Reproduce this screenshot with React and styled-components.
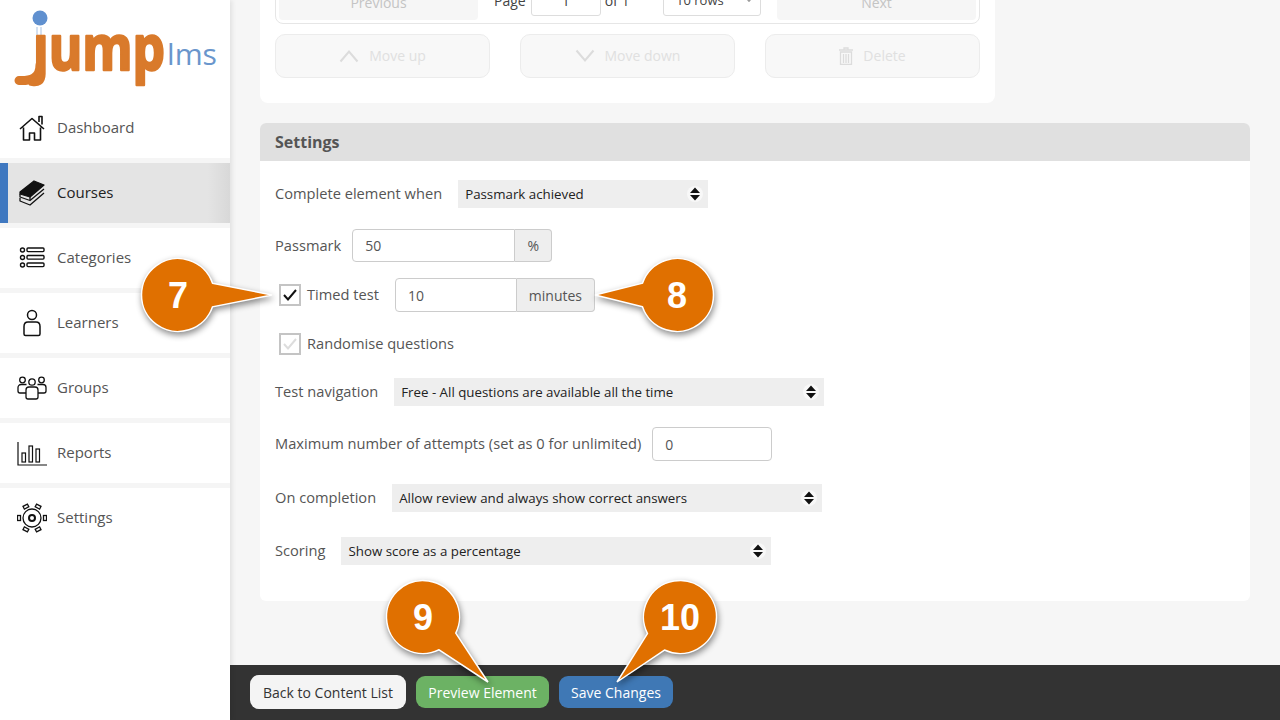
import React from 'react'
import styled, { createGlobalStyle } from 'styled-components'

const GlobalStyle = createGlobalStyle`
  html, body {
    margin: 0;
    height: 100%;
    overflow: hidden;
  }
  body {
    font-family: "Open Sans", "Liberation Sans", sans-serif;
    color: #444;
  }
  * {
    box-sizing: border-box;
  }
`

const Page = styled.div`
  position: relative;
  display: flex;
  width: 1280px;
  height: 720px;
  overflow: hidden;
  background: #f6f6f6;
`

const Sidebar = styled.aside`
  flex: 0 0 230px;
  background: #fff;
  box-shadow: 2px 0 5px rgba(0, 0, 0, 0.09);
  z-index: 1;
`

const LogoBox = styled.div`
  height: 98px;
`

const Nav = styled.nav`
  display: flex;
  flex-direction: column;
  gap: 5px;
  background: #f5f5f5;
`

const NavItem = styled.a`
  display: flex;
  align-items: center;
  gap: 10px;
  height: 60px;
  padding-left: ${p => (p.$active ? '9px' : '17px')};
  font-size: 15px;
  color: ${p => (p.$active ? '#222' : '#555')};
  background: ${p => (p.$active ? 'linear-gradient(90deg, #e4e4e4 90%, #d8d8d8 100%)' : '#fff')};
  border-left: ${p => (p.$active ? '8px solid #3f78c0' : 'none')};
`

const NavLabel = styled.span`
  margin-bottom: 2px;
`

const IconBox = styled.svg`
  flex: 0 0 30px;
  width: 30px;
  height: 30px;
`

const Main = styled.main`
  flex: 1;
  display: flex;
  flex-direction: column;
  min-width: 0;
`

const Content = styled.div`
  flex: 1;
  display: flex;
  flex-direction: column;
  justify-content: flex-end;
  gap: 20px;
  min-height: 0;
  overflow: hidden;
  padding: 0 30px 64px;
`

const TopCard = styled.section`
  flex: none;
  width: 735px;
  padding: 0 15px 25px;
  background: #fff;
  border-radius: 0 0 8px 8px;
`

const Pager = styled.div`
  display: flex;
  justify-content: space-between;
  align-items: flex-start;
  height: 44px;
  padding: 3px;
  border: 1px solid #e6e6e6;
  border-radius: 8px;
`

const PagerButton = styled.div`
  display: flex;
  align-items: center;
  justify-content: center;
  width: 199px;
  height: 36px;
  font-size: 14px;
  color: #c4c4c4;
  background: #f6f6f6;
  border-radius: 4px;
`

const PagerMiddle = styled.div`
  display: flex;
  align-items: center;
  width: 267px;
  height: 32px;
  font-size: 14px;
  color: #444;
`

const PageInput = styled.div`
  display: flex;
  align-items: center;
  justify-content: center;
  width: 70px;
  height: 32px;
  margin: 0 4px 0 5px;
  background: #fff;
  border: 1px solid #ddd;
  border-radius: 3px;
`

const RowsSelect = styled.div`
  display: flex;
  align-items: center;
  justify-content: space-between;
  width: 98px;
  height: 32px;
  margin-left: auto;
  padding: 0 7px 0 12px;
  background: #fff;
  border: 1px solid #ddd;
  border-radius: 3px;
  font-size: 13px;
`

const MoveRow = styled.div`
  display: flex;
  justify-content: space-between;
  margin-top: 10px;
`

const MoveButton = styled.div`
  display: flex;
  align-items: center;
  justify-content: center;
  gap: 10px;
  width: 215px;
  height: 44px;
  padding-bottom: 2px;
  font-size: 14px;
  color: #e0e0e0;
  background: #f8f8f8;
  border: 1px solid #ececec;
  border-radius: 10px;
  svg {
    margin-top: 2px;
  }
`

const Panel = styled.section`
  flex: none;
  background: #fff;
  border-radius: 6px;
`

const PanelHeader = styled.h2`
  display: flex;
  align-items: center;
  height: 38px;
  margin: 0;
  padding: 0 15px;
  font-size: 16px;
  font-weight: 700;
  color: #555;
  background: #e0e0e0;
  border-radius: 6px 6px 0 0;
`

const PanelBody = styled.div`
  padding: 19px 15px 36px;
`

const Row = styled.div`
  display: flex;
  align-items: center;
  gap: ${p => p.$gap || 16}px;
  margin-top: ${p => p.$top || 0}px;
  margin-left: ${p => p.$indent || 0}px;
`

const Label = styled.span`
  margin-bottom: 2px;
  font-size: 14.65px;
  color: #555;
`

const SelectBox = styled.div`
  display: flex;
  align-items: center;
  justify-content: space-between;
  width: ${p => p.$width}px;
  height: 28px;
  padding: 0 5px 0 7px;
  font-size: 13.3px;
  color: #222;
  background: #eee;
`

const InputGroup = styled.div`
  display: flex;
  height: ${p => p.$height}px;
  margin-left: ${p => p.$left || 0}px;
`

const TextInput = styled.input`
  width: ${p => p.$width}px;
  height: 100%;
  padding: 0 12px;
  font: 14px "Open Sans", sans-serif;
  color: #555;
  background: #fff;
  border: 1px solid #ccc;
  border-radius: ${p => (p.$joined ? '4px 0 0 4px' : '4px')};
  outline: none;
`

const Addon = styled.div`
  display: flex;
  align-items: center;
  justify-content: center;
  width: ${p => p.$width}px;
  font-size: 14px;
  color: #555;
  background: #eee;
  border: 1px solid #ccc;
  border-left: none;
  border-radius: 0 4px 4px 0;
`

const CheckBox = styled.span`
  display: flex;
  align-items: center;
  justify-content: center;
  width: 22px;
  height: 22px;
  background: #fff;
  border: 2px solid #c4c4c4;
  color: ${p => (p.$faded ? '#ddd' : '#111')};
`

const Footer = styled.footer`
  flex: 0 0 55px;
  display: flex;
  align-items: center;
  gap: 10px;
  padding: 0 0 1px 20px;
  background: #333;
`

const FooterButton = styled.div`
  display: flex;
  align-items: center;
  justify-content: center;
  width: ${p => p.$width}px;
  height: ${p => p.$height || 32}px;
  font-size: 14px;
  color: ${p => p.$color || '#fff'};
  background: ${p => p.$bg};
  border-radius: 9px;
`

const CalloutLayer = styled.svg`
  position: absolute;
  inset: 0;
  z-index: 2;
  pointer-events: none;
`

const CalloutShape = styled.path`
  fill: #e07000;
  stroke: #fff;
  stroke-width: 1.5;
  filter: drop-shadow(1px 3px 3px rgba(0, 0, 0, 0.45));
`

const CalloutNumber = styled.text`
  font-family: "Liberation Sans", Arial, sans-serif;
  font-size: 36px;
  font-weight: 700;
  fill: #fff;
  text-anchor: middle;
`

const LogoJump = styled.text`
  font-family: "Open Sans", sans-serif;
  font-size: 62px;
  font-weight: 700;
  fill: #d97a2b;
  stroke: #d97a2b;
  stroke-width: 2.5;
  stroke-linejoin: round;
`

const LogoLms = styled.text`
  font-family: "Open Sans", sans-serif;
  font-size: 30px;
  fill: #6a96cc;
`

const Logo = () => (
  <svg width="230" height="98" viewBox="0 0 230 98">
    <circle cx="40" cy="18" r="7.5" fill="#6090cf" />
    <path d="M37 27v8M41 27v8" stroke="#a9c2e3" strokeWidth="1" />
    <path d="M19 80.500C31 81 40 78 40 65" fill="none" stroke="#d97a2b" strokeWidth="9" strokeLinecap="round" />
    <LogoJump x="33" y="70" textLength="132" lengthAdjust="spacingAndGlyphs">ȷump</LogoJump>
    <LogoLms x="167" y="65" textLength="50" lengthAdjust="spacingAndGlyphs">lms</LogoLms>
  </svg>
)

const HouseIcon = () => (
  <IconBox viewBox="0 0 30 30" fill="none" stroke="#111" strokeWidth="1.6" strokeLinejoin="round">
    <path d="M3 16 15 5.5 27 16M6.5 14.5V27h6v-7h5v7h6V14.5" />
    <path d="M22 9V3.5h3V11.5" />
  </IconBox>
)

const BooksIcon = () => (
  <IconBox viewBox="0 0 30 30" fill="none" stroke="#111" strokeWidth="1.3" strokeLinejoin="round">
    <path d="M3 14 17 3 27 7 13 19 3 16Z" fill="#111" />
    <path d="M3 16v3l10 3.5L27 11" />
    <path d="M3 20v3l10 4L27 15" />
    <path d="M13 19v3" />
  </IconBox>
)

const ListIcon = () => (
  <IconBox viewBox="0 0 30 30" fill="none" stroke="#111" strokeWidth="1.4">
    <circle cx="5.5" cy="7" r="2" />
    <circle cx="5.5" cy="14.5" r="2" />
    <circle cx="5.5" cy="22" r="2" />
    <rect x="10" y="5" width="17" height="3.6" rx="1" />
    <rect x="10" y="12.5" width="17" height="3.6" rx="1" />
    <rect x="10" y="20" width="17" height="3.6" rx="1" />
  </IconBox>
)

const PersonIcon = () => (
  <IconBox viewBox="0 0 30 30" fill="none" stroke="#111" strokeWidth="1.5">
    <circle cx="15" cy="7" r="4.5" />
    <path d="M11 14h8c2.5 0 4 2 4 4.5V26a1.5 1.5 0 0 1-1.5 1.5h-13A1.5 1.5 0 0 1 7 26v-7.5C7 16 8.5 14 11 14Z" />
  </IconBox>
)

const GroupIcon = () => (
  <IconBox viewBox="0 0 30 30" fill="none" stroke="#111" strokeWidth="1.3">
    <circle cx="5.5" cy="7" r="2.8" />
    <circle cx="24.5" cy="7" r="2.8" />
    <circle cx="15" cy="9" r="3.2" />
    <path d="M9.5 11.5H4a3 3 0 0 0-3 3V18a2 2 0 0 0 2 2h6" />
    <path d="M20.5 11.5H26a3 3 0 0 1 3 3V18a2 2 0 0 1-2 2h-6" />
    <path d="M12 14h6a3 3 0 0 1 3 3v7a2 2 0 0 1-2 2h-8a2 2 0 0 1-2-2v-7a3 3 0 0 1 3-3Z" />
  </IconBox>
)

const ChartIcon = () => (
  <IconBox viewBox="0 0 30 30" fill="none" stroke="#111" strokeWidth="1.2">
    <path d="M1 4v23h29" />
    <rect x="5" y="15" width="3.5" height="9" />
    <rect x="12" y="8" width="3.5" height="16" />
    <rect x="19" y="11" width="3.5" height="13" />
  </IconBox>
)

const gearPetals = [-28, 28, 90, 152, 208, 270]

const GearIcon = () => (
  <IconBox viewBox="0 0 30 30" fill="none" stroke="#111" strokeWidth="1.3">
    <circle cx="15" cy="15" r="3" strokeWidth="2" />
    <circle cx="15" cy="15" r="9" />
    {gearPetals.map(a => (
      <rect key={a} x="12.5" y="0.5" width="5" height="3" transform={`rotate(${a} 15 15)`} />
    ))}
  </IconBox>
)

const SortArrows = () => (
  <svg width="16" height="16" viewBox="0 0 16 16">
    <circle cx="8" cy="8" r="8" fill="#f8f8f8" />
    <path d="M8 1.5 13 7H3ZM8 14.5 3 9h10Z" fill="#111" />
  </svg>
)

const Chevron = ({ up }) => (
  <svg width="20" height="14" viewBox="0 0 20 14" fill="none" stroke="#dcdcdc" strokeWidth="2">
    <path d={up ? 'M1.5 12.5 10 2.5l8.5 10' : 'M1.5 1.5 10 11.5l8.5-10'} />
  </svg>
)

const Trash = () => (
  <svg width="14" height="18" viewBox="0 0 14 18" fill="none" stroke="#dcdcdc" strokeWidth="1.3">
    <path d="M0 3h14M5 3V1h4v2M1.5 5h11v12.5h-11ZM4.5 7v9M7 7v9M9.5 7v9" />
  </svg>
)

const Tick = () => (
  <svg width="16" height="14" viewBox="0 0 16 14" fill="none" stroke="currentColor" strokeWidth="2">
    <path d="M2 7l4 4.5L14 2" />
  </svg>
)

const navItems = [
  { label: 'Dashboard', icon: HouseIcon },
  { label: 'Courses', icon: BooksIcon, active: true },
  { label: 'Categories', icon: ListIcon },
  { label: 'Learners', icon: PersonIcon },
  { label: 'Groups', icon: GroupIcon },
  { label: 'Reports', icon: ChartIcon },
  { label: 'Settings', icon: GearIcon },
]

const callouts = [
  { n: 7, cx: 178, cy: 295, tipX: 272, tipY: 295 },
  { n: 8, cx: 677, cy: 295, tipX: 595, tipY: 295 },
  { n: 9, cx: 423, cy: 617, tipX: 488, tipY: 682 },
  { n: 10, cx: 680, cy: 617, tipX: 617, tipY: 682 },
]

// circle plus a wedge running out to the tip
const calloutPath = ({ cx, cy, tipX, tipY }) => {
  const r = 36.5
  const angle = Math.atan2(tipY - cy, tipX - cx)
  const spread = 0.33
  const x1 = cx + r * Math.cos(angle - spread)
  const y1 = cy + r * Math.sin(angle - spread)
  const x2 = cx + r * Math.cos(angle + spread)
  const y2 = cy + r * Math.sin(angle + spread)
  return `M${x1} ${y1}L${tipX} ${tipY}L${x2} ${y2}A${r} ${r} 0 1 1 ${x1} ${y1}Z`
}

const Select = ({ width, children }) => (
  <SelectBox $width={width}>
    <span>{children}</span>
    <SortArrows />
  </SelectBox>
)

const App = () => {
  return (
    <Page>
      <GlobalStyle />
      <Sidebar>
        <LogoBox>
          <Logo />
        </LogoBox>
        <Nav>
          {navItems.map(({ label, icon: Icon, active }) => (
            <NavItem key={label} $active={active}>
              <Icon />
              <NavLabel>{label}</NavLabel>
            </NavItem>
          ))}
        </Nav>
      </Sidebar>
      <Main>
        <Content>
          <TopCard>
            <Pager>
              <PagerButton>Previous</PagerButton>
              <PagerMiddle>
                Page
                <PageInput>1</PageInput>
                of 1
                <RowsSelect>
                  10 rows
                  <svg width="8" height="6" viewBox="0 0 8 6" fill="none" stroke="#666">
                    <path d="M1 1l3 3.5L7 1" />
                  </svg>
                </RowsSelect>
              </PagerMiddle>
              <PagerButton>Next</PagerButton>
            </Pager>
            <MoveRow>
              <MoveButton><Chevron up />Move up</MoveButton>
              <MoveButton><Chevron />Move down</MoveButton>
              <MoveButton><Trash />Delete</MoveButton>
            </MoveRow>
          </TopCard>
          <Panel>
            <PanelHeader>Settings</PanelHeader>
            <PanelBody>
              <Row>
                <Label>Complete element when</Label>
                <Select width={250}>Passmark achieved</Select>
              </Row>
              <Row $top={21} $gap={11}>
                <Label>Passmark</Label>
                <InputGroup $height={33}>
                  <TextInput $width={163} $joined defaultValue="50" />
                  <Addon $width={37}>%</Addon>
                </InputGroup>
              </Row>
              <Row $top={16} $gap={6} $indent={4}>
                <CheckBox><Tick /></CheckBox>
                <Label>Timed test</Label>
                <InputGroup $height={34} $left={10}>
                  <TextInput $width={122} $joined defaultValue="10" />
                  <Addon $width={78}>minutes</Addon>
                </InputGroup>
              </Row>
              <Row $top={21} $gap={6} $indent={4}>
                <CheckBox $faded><Tick /></CheckBox>
                <Label>Randomise questions</Label>
              </Row>
              <Row $top={23}>
                <Label>Test navigation</Label>
                <Select width={430}>Free - All questions are available all the time</Select>
              </Row>
              <Row $top={21} $gap={11}>
                <Label>Maximum number of attempts (set as 0 for unlimited)</Label>
                <InputGroup $height={34}>
                  <TextInput $width={120} defaultValue="0" />
                </InputGroup>
              </Row>
              <Row $top={23}>
                <Label>On completion</Label>
                <Select width={430}>Allow review and always show correct answers</Select>
              </Row>
              <Row $top={25}>
                <Label>Scoring</Label>
                <Select width={430}>Show score as a percentage</Select>
              </Row>
            </PanelBody>
          </Panel>
        </Content>
        <Footer>
          <FooterButton $width={156} $height={34} $bg="#f4f4f4" $color="#333">Back to Content List</FooterButton>
          <FooterButton $width={133} $bg="#6cb264">Preview Element</FooterButton>
          <FooterButton $width={114} $bg="#3f78b5">Save Changes</FooterButton>
        </Footer>
      </Main>
      <CalloutLayer width="1280" height="720" viewBox="0 0 1280 720">
        {callouts.map(c => (
          <g key={c.n}>
            <CalloutShape d={calloutPath(c)} />
            <CalloutNumber x={c.cx} y={c.cy + 13}>{c.n}</CalloutNumber>
          </g>
        ))}
      </CalloutLayer>
    </Page>
  )
}

export default App
